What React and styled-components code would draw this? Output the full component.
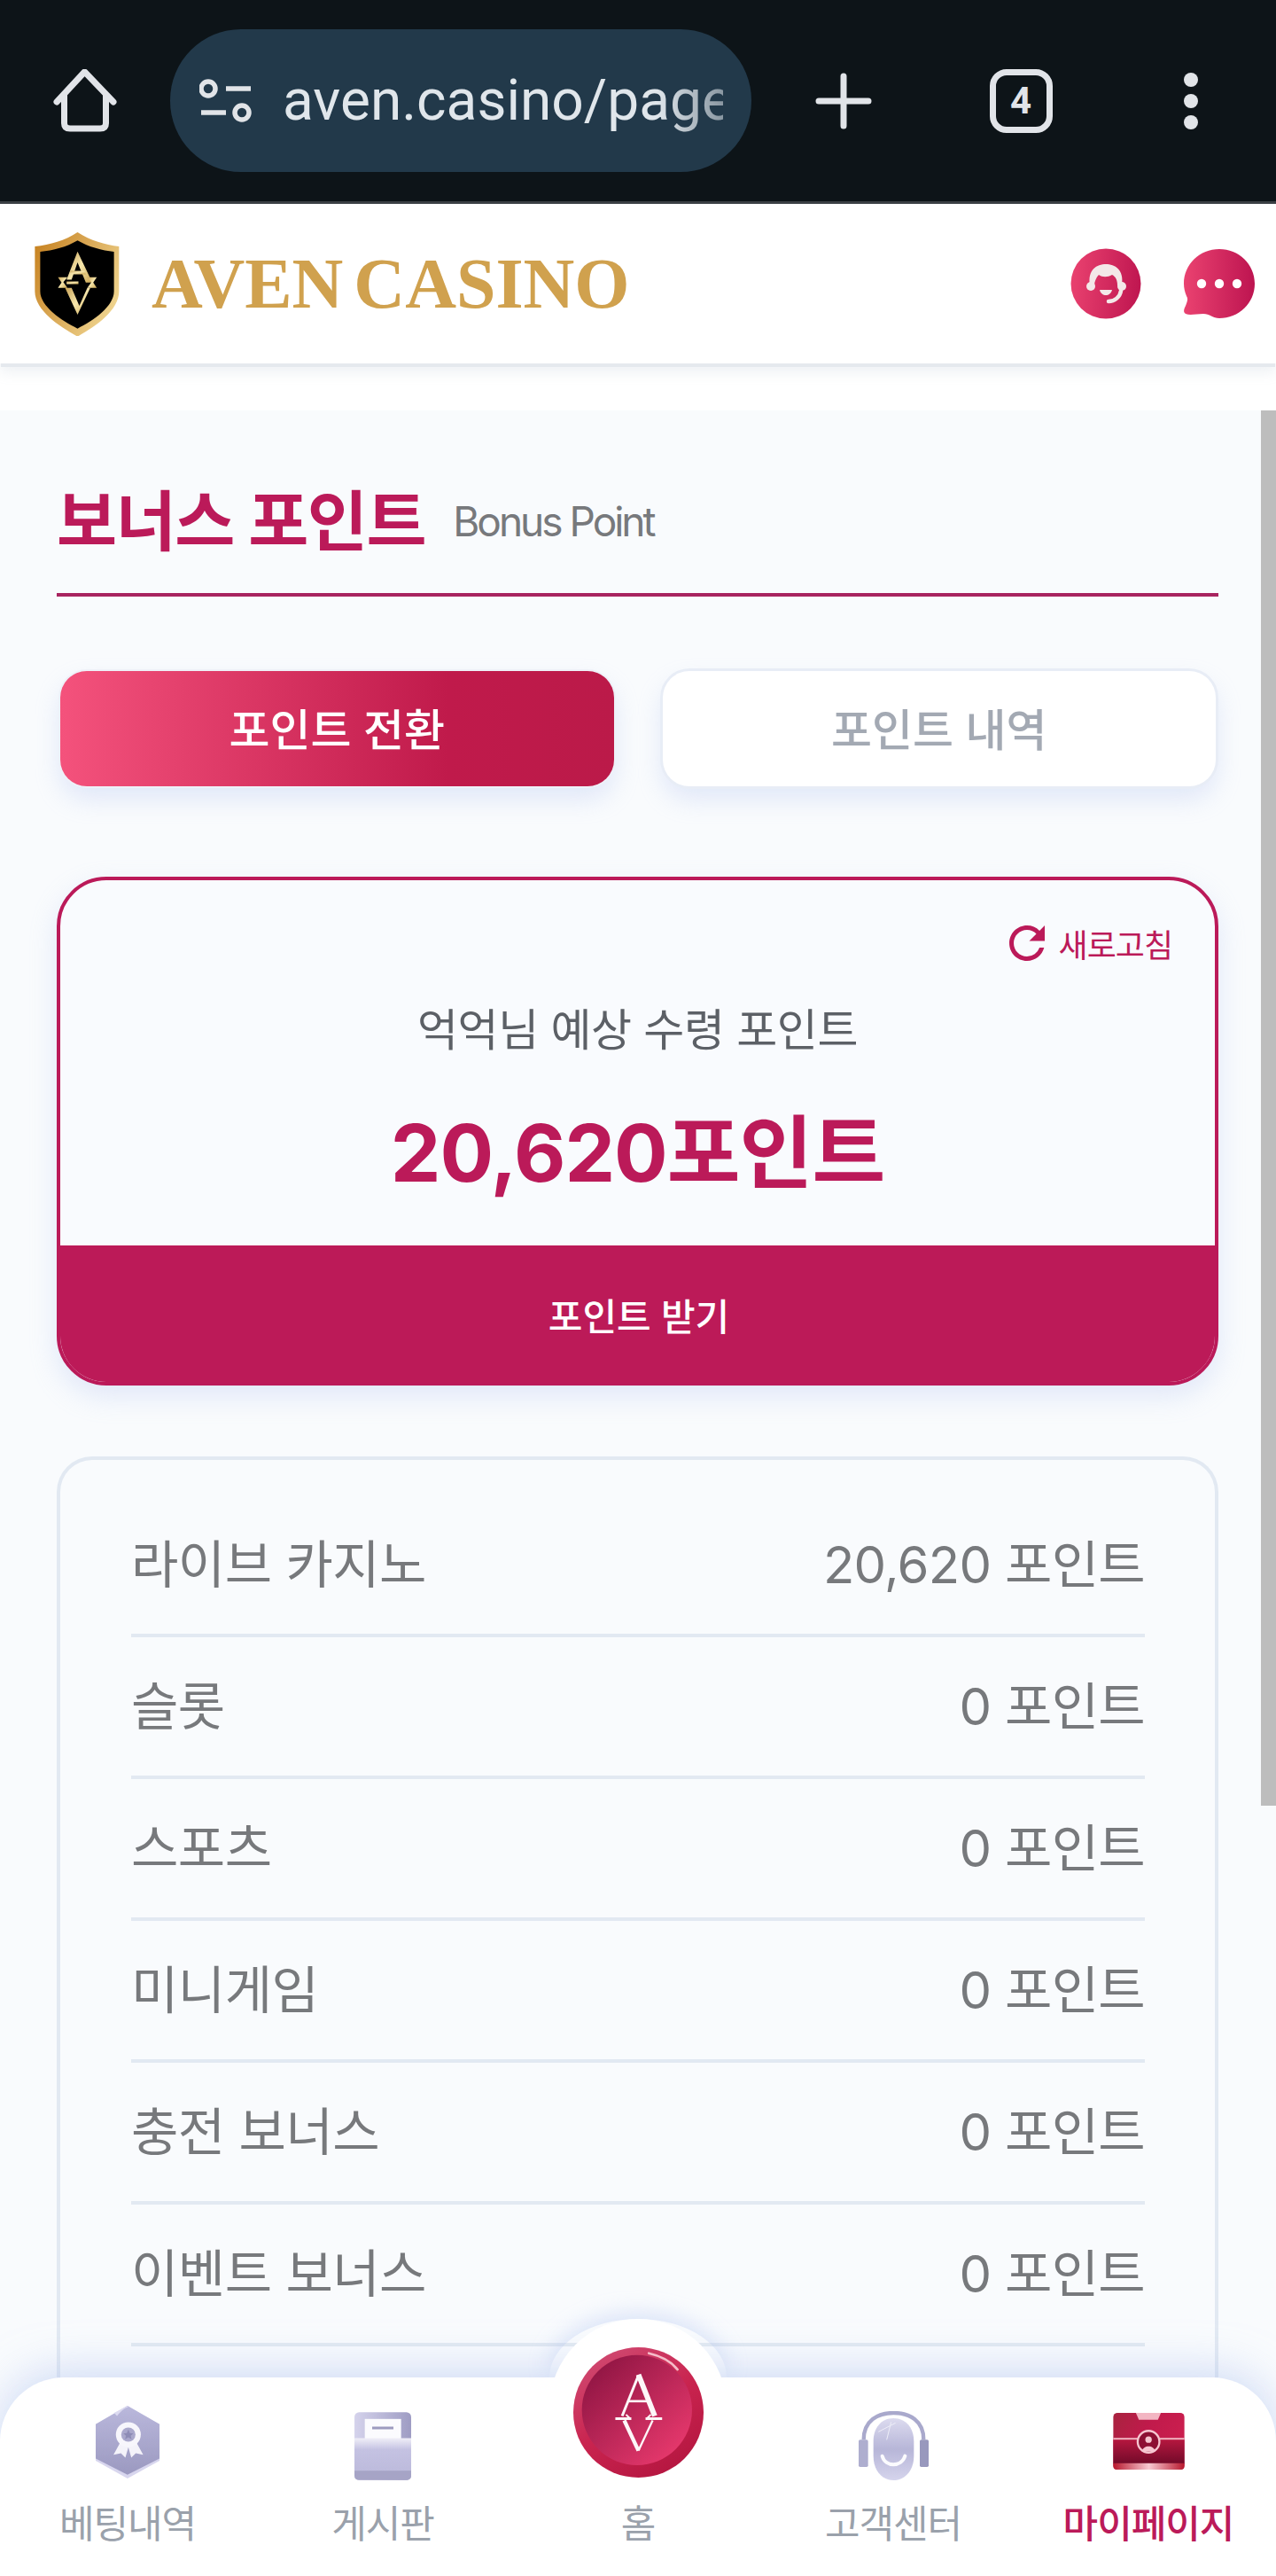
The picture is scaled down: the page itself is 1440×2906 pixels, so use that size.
import React from "react";
import styled, { createGlobalStyle } from "styled-components";
import { MdRefresh } from "react-icons/md";

const GlobalStyle = createGlobalStyle`
  html, body { margin: 0; padding: 0; background: #fff; }
  * { box-sizing: border-box; }
  body { font-family: Inter, "Noto Sans CJK KR", sans-serif; }
`;

const Page = styled.div`
  position: relative;
  height: 100vh;
  overflow: hidden;
  display: flex;
  flex-direction: column;
  background: #fff;
`;

/* browser chrome */
const BrowserBar = styled.div`
  flex: none;
  height: 230px;
  background: #0d1418;
  border-bottom: 3px solid #3a3f44;
  display: flex;
  align-items: center;
`;
const ChromeCell = styled.div`
  flex: none;
  width: ${(p) => p.$w}px;
  display: flex;
  align-items: center;
  justify-content: center;
`;
const UrlPill = styled.div`
  flex: none;
  width: 656px;
  height: 161px;
  border-radius: 80px;
  background: #22394a;
  display: flex;
  align-items: center;
  padding: 0 32px 0 33px;
`;
const UrlText = styled.div`
  margin-left: 34px;
  flex: 1;
  overflow: hidden;
  white-space: nowrap;
  font-family: Roboto, sans-serif;
  font-size: 64px;
  line-height: 90px;
  color: #e0e6eb;
  -webkit-mask-image: linear-gradient(90deg, #000 85%, rgba(0, 0, 0, 0.55) 100%);
  mask-image: linear-gradient(90deg, #000 85%, rgba(0, 0, 0, 0.55) 100%);
`;
const TabCount = styled.div`
  width: 71px;
  height: 72px;
  border: 7px solid #e1e4e8;
  border-radius: 19px;
  display: flex;
  align-items: center;
  justify-content: center;
  font-family: Roboto, sans-serif;
  font-weight: 700;
  font-size: 42px;
  color: #e1e4e8;
`;
const MenuDots = styled.div`
  display: flex;
  flex-direction: column;
  gap: 8px;
`;
const MenuDot = styled.span`
  display: block;
  width: 16px;
  height: 16px;
  border-radius: 50%;
  background: #e1e4e8;
`;

/* site header */
const SiteHeader = styled.header`
  flex: none;
  height: 180px;
  background: #fff;
  display: flex;
  align-items: center;
  padding: 0 24px 0 39px;
  box-shadow: 0 5px 0 -1px #e5e9ee, 0 10px 14px rgba(150, 165, 185, 0.16);
  position: relative;
`;
const Brand = styled.div`
  display: flex;
  align-items: center;
  gap: 36px;
  flex: 1;
`;
const BrandName = styled.div`
  font-family: "Liberation Serif", serif;
  font-weight: 700;
  font-size: 80px;
  line-height: 1;
  color: #d0a14e;
  letter-spacing: 0;
  word-spacing: -8px;
  white-space: nowrap;
`;
const HeaderActions = styled.div`
  display: flex;
  align-items: center;
  gap: 48px;
`;

/* main */
const Main = styled.main`
  flex: 1;
  min-height: 0;
  margin-top: 53px;
  background: #f9fbfd;
  padding: 0 65px 0 64px;
  display: flex;
  flex-direction: column;
`;
const TitleRow = styled.div`
  flex: none;
  display: flex;
  align-items: center;
  gap: 31px;
  padding: 80px 0 36px;
  border-bottom: 4px solid #a8245f;
`;
const Title = styled.h1`
  margin: 0;
  font-size: 74px;
  line-height: 90px;
  font-weight: 700;
  letter-spacing: -1.4px;
  color: #bb1a59;
`;
const SubTitle = styled.span`
  font-size: 46px;
  line-height: 60px;
  font-weight: 400;
  letter-spacing: -3px;
  color: #77797c;
`;
const TabRow = styled.div`
  flex: none;
  margin-top: 84px;
  padding: 0 3px 0 4px;
  display: grid;
  grid-template-columns: 1fr 1fr;
  gap: 55px;
`;
const TabButton = styled.button`
  height: 130px;
  border: 0;
  border-radius: 30px;
  padding: 0 0 5px;
  font-family: inherit;
  font-size: 50px;
  font-weight: 500;
  color: ${(p) => (p.$active ? "#fff" : "#a3a9b3")};
  background: ${(p) =>
    p.$active ? "linear-gradient(90deg, #f4527c 0%, #c01a4b 70%, #bb1a49 100%)" : "#fff"};
  box-shadow: ${(p) => (p.$active ? "0 0 0 2px #eef1f8," : "0 0 0 3px #e8edf6,")}
    0 14px 28px rgba(170, 190, 240, 0.32);
`;
const PointCard = styled.section`
  flex: none;
  margin-top: 102px;
  height: 574px;
  border: 4px solid #bb1a59;
  border-radius: 56px;
  overflow: hidden;
  display: flex;
  flex-direction: column;
  box-shadow: 0 12px 30px rgba(170, 190, 240, 0.3);
  background: #f9fbfe;
`;
const PointBody = styled.div`
  flex: 1;
  padding: 51px 48px 0;
  display: flex;
  flex-direction: column;
  align-items: center;
`;
const RefreshLink = styled.div`
  align-self: flex-end;
  height: 40px;
  display: flex;
  align-items: center;
  gap: 11px;
  font-size: 36px;
  letter-spacing: -1px;
  color: #bb1a59;
  svg { flex: none; margin: 0 -5px 0 -10px; }
`;
const PointLabel = styled.div`
  margin-top: 48px;
  font-size: 50px;
  letter-spacing: -0.4px;
  line-height: 60px;
  color: #5c6066;
`;
const PointValue = styled.div`
  margin-top: 54px;
  font-size: 90px;
  line-height: 110px;
  font-weight: 700;
  letter-spacing: -1px;
  color: #bb1a59;
`;
const ClaimBand = styled.div`
  flex: none;
  height: 154px;
  background: #bc1a58;
  color: #fff;
  font-size: 42px;
  font-weight: 500;
  display: flex;
  align-items: center;
  justify-content: center;
  padding-left: 3px;
`;
const BreakdownCard = styled.section`
  flex: 1;
  min-height: 0;
  margin-top: 80px;
  border: 4px solid #e2e9f2;
  border-bottom: 0;
  border-radius: 40px 40px 0 0;
  padding: 40px 79px 0 80px;
`;
const Row = styled.div`
  height: 160px;
  padding-bottom: 8px;
  border-bottom: 4px solid #e2e9f2;
  display: flex;
  align-items: center;
  justify-content: space-between;
  font-size: 58px;
  color: #77797c;
  letter-spacing: -0.5px;
`;
const RowValue = styled.span`
  letter-spacing: -0.7px;
`;

/* scrollbar */
const ScrollThumb = styled.div`
  position: absolute;
  top: 463px;
  right: 0;
  width: 17px;
  height: 1574px;
  background: #bdbdbd;
`;

/* bottom nav */
const BottomNav = styled.nav`
  position: absolute;
  left: 0;
  right: 0;
  bottom: 0;
  height: 224px;
  background: #fff;
  border-radius: 72px 72px 0 0;
  box-shadow: 0 -6px 50px rgba(170, 190, 240, 0.55);
  display: grid;
  grid-template-columns: repeat(5, 1fr);
`;
const NavItem = styled.div`
  position: relative;
  display: flex;
  flex-direction: column;
  align-items: center;
  padding-top: 30px;
`;
const NavIconBox = styled.div`
  height: 86px;
  display: flex;
  align-items: flex-end;
  justify-content: center;
  svg { margin-bottom: ${(p) => p.$lift || 0}px; }
`;
const NavLabel = styled.div`
  margin-top: 24px;
  font-size: 43px;
  line-height: 50px;
  letter-spacing: -1px;
  white-space: nowrap;
  font-weight: ${(p) => (p.$active ? 500 : 400)};
  color: ${(p) => (p.$active ? "#bb1a59" : "#9aa1ab")};
`;
const HomeGlow = styled.div`
  position: absolute;
  top: -66px;
  left: 50%;
  margin-left: -100px;
  width: 200px;
  height: 66px;
  border-radius: 100px 100px 0 0 / 66px 66px 0 0;
  box-shadow: 0 -6px 24px rgba(170, 190, 240, 0.4);
  clip-path: inset(-40px -40px 0 -40px);
`;
const HomeDisc = styled.div`
  position: absolute;
  top: -66px;
  left: 50%;
  margin-left: -100px;
  width: 200px;
  height: 200px;
  border-radius: 50%;
  background: #fff;
  display: flex;
  justify-content: center;
  padding-top: 32px;
`;

const HomeGlyph = () => (
  <svg width="72" height="72" viewBox="60 78 72 72" fill="none" stroke="#e1e4e8" strokeWidth="7" strokeLinecap="round" strokeLinejoin="round">
    <path d="M64 115 L95.5 81 L128 115" />
    <path d="M72.5 108 V139 Q72.5 145 79 145 H113 Q119.5 145 119.5 139 V108" />
  </svg>
);
const TuneGlyph = () => (
  <svg width="60" height="52" viewBox="226 88 60 52" fill="none" stroke="#e1e4e8" strokeWidth="5.5">
    <circle cx="236" cy="100" r="8" />
    <circle cx="274" cy="127" r="8" />
    <path d="M256 100 H284 M228 127 H256" />
  </svg>
);
const PlusGlyph = () => (
  <svg width="64" height="64" viewBox="0 0 64 64" stroke="#e1e4e8" strokeWidth="7" strokeLinecap="round">
    <path d="M32 4 V60 M4 32 H60" />
  </svg>
);

const ShieldLogo = () => (
  <svg width="96" height="117" viewBox="28 20 285 350">
    <defs>
      <linearGradient id="shieldRim" x1="0" y1="0" x2="1" y2="0.6">
        <stop offset="0" stopColor="#c67f1c" />
        <stop offset="0.5" stopColor="#d9a754" />
        <stop offset="1" stopColor="#eed28c" />
      </linearGradient>
      <linearGradient id="shieldMark" x1="0" y1="0" x2="1" y2="1">
        <stop offset="0" stopColor="#c9a256" />
        <stop offset="0.5" stopColor="#f6e6ac" />
        <stop offset="1" stopColor="#cba652" />
      </linearGradient>
    </defs>
    <path d="M172 20 C215 48 265 62 312 68 V220 C312 285 230 340 172 372 C114 340 28 285 28 220 V68 C80 62 130 48 172 20 Z" fill="url(#shieldRim)" />
    <path d="M172 48 C210 70 255 82 295 86 V220 C295 270 225 320 172 345 C119 320 46 270 46 220 V86 C90 82 135 70 172 48 Z" fill="#000" />
    <g fill="url(#shieldMark)">
      <path d="M172 85 L222 190 H200 L172 122 L152 180 H135 Z" />
      <path d="M148 150 H196 L200 162 H144 Z" />
      <path d="M106 172 H138 L124 188 L138 208 H106 L118 190 Z" />
      <path d="M205 172 H237 L225 190 L237 208 H205 L219 188 Z" />
      <path d="M130 208 H152 L178 268 L205 208 H215 L172 298 Z" />
      <rect x="135" y="186" width="40" height="9" />
    </g>
  </svg>
);

const SupportBadge = () => (
  <svg width="80" height="80" viewBox="0 0 80 80">
    <defs>
      <linearGradient id="badgeA" x1="0" y1="0.4" x2="1" y2="0.5">
        <stop offset="0" stopColor="#e9416f" />
        <stop offset="1" stopColor="#bf1650" />
      </linearGradient>
    </defs>
    <circle cx="40" cy="40" r="39.5" fill="url(#badgeA)" />
    <path d="M22 42 C19 24 30 18 40 18 C50 18 61 24 58 42 L53 42 C53 36 51 32 47 30 C42 33 36 33 32 30 C29 33 27 38 27 42 Z" fill="#f3e8e8" />
    <circle cx="23" cy="43" r="5" fill="#f3e8e8" />
    <circle cx="58" cy="43" r="5" fill="#f3e8e8" />
    <path d="M33 47 H47 C46 51 43 53 40 53 C37 53 34 51 33 47 Z" fill="#f3e8e8" />
    <path d="M57 48 C56 55 50 60 43 60" fill="none" stroke="#f3e8e8" strokeWidth="4.5" strokeLinecap="round" />
  </svg>
);
const ChatBadge = () => (
  <svg width="80" height="80" viewBox="0 0 80 80">
    <defs>
      <linearGradient id="badgeB" x1="0" y1="0.5" x2="1" y2="0.5">
        <stop offset="0" stopColor="#ea4270" />
        <stop offset="1" stopColor="#bd1450" />
      </linearGradient>
    </defs>
    <path d="M40 1 C62 1 80 18 80 40 C80 62 62 79 40 79 C33 79 29 74 22 74 C14 74 7 76 2 74 C-1 72 0 69 2 65 C4 60 5 57 3 54 C1 49 0 45 0 40 C0 18 18 1 40 1 Z" fill="url(#badgeB)" />
    <circle cx="20" cy="40" r="5.2" fill="#fff" />
    <circle cx="40" cy="40" r="5.2" fill="#fff" />
    <circle cx="60" cy="40" r="5.2" fill="#fff" />
  </svg>
);

const BadgeIcon = () => (
  <svg width="72" height="82" viewBox="40 40 215 245">
    <defs>
      <linearGradient id="hexA" x1="0" y1="0" x2="0" y2="1">
        <stop offset="0" stopColor="#bab8dc" />
        <stop offset="1" stopColor="#9b99c0" />
      </linearGradient>
    </defs>
    <path d="M147 40 L255 102 V225 L147 285 L40 225 V102 Z" fill="#d8d6ee" />
    <path d="M147 40 L255 102 V218 L147 272 L40 218 V102 Z" fill="url(#hexA)" />
    <path d="M147 40 L150 44 C135 48 122 62 112 74 L102 64 Z" fill="#dcdaf0" />
    <path d="M122 165 L100 205 L125 200 L140 215 L150 180 L160 215 L175 200 L200 205 L178 165 Z" fill="#f4f3fa" />
    <circle cx="150" cy="137" r="42" fill="#f7f6fc" />
    <circle cx="150" cy="137" r="24" fill="#aaa8cc" />
    <path d="M150 120 L155 132 L167 133 L158 141 L161 153 L150 146 L139 153 L142 141 L133 133 L145 132 Z" fill="#8e8cb6" />
  </svg>
);
const BoardIcon = () => (
  <svg width="64" height="77" viewBox="915 62 192 230">
    <defs>
      <linearGradient id="boardTop" x1="0" y1="0" x2="1" y2="0">
        <stop offset="0" stopColor="#d5d3ec" />
        <stop offset="1" stopColor="#9e9cc3" />
      </linearGradient>
      <linearGradient id="boardLow" x1="0" y1="0" x2="0" y2="1">
        <stop offset="0" stopColor="#f0eff8" />
        <stop offset="0.35" stopColor="#c4c2e2" />
        <stop offset="1" stopColor="#bdbbdc" />
      </linearGradient>
    </defs>
    <rect x="915" y="62" width="192" height="230" rx="16" fill="url(#boardTop)" />
    <rect x="950" y="85" width="123" height="70" fill="#fbfbfe" />
    <rect x="975" y="111" width="72" height="9" fill="#9d9bbf" />
    <rect x="915" y="150" width="192" height="112" fill="url(#boardLow)" />
    <path d="M915 260 H1107 V276 Q1107 292 1091 292 H931 Q915 292 915 276 Z" fill="#a6a4c6" />
  </svg>
);
const HeadsetIcon = () => (
  <svg width="79" height="78" viewBox="25 38 237 234">
    <defs>
      <linearGradient id="headA" x1="0" y1="0" x2="0" y2="1">
        <stop offset="0" stopColor="#dcdbef" />
        <stop offset="0.5" stopColor="#b7b6d8" />
        <stop offset="1" stopColor="#d5d4ec" />
      </linearGradient>
    </defs>
    <path d="M42 135 C42 70 90 44 143 44 C197 44 245 70 245 135" fill="none" stroke="#a9a9cc" strokeWidth="13" />
    <path d="M143 62 C185 62 212 95 212 140 V190 C212 240 180 272 143 272 C106 272 75 240 75 190 V140 C75 95 101 62 143 62 Z" fill="url(#headA)" />
    <rect x="25" y="135" width="32" height="92" rx="5" fill="#aeaecf" />
    <rect x="232" y="135" width="30" height="92" rx="5" fill="#9898bd" />
    <path d="M92 108 L150 78 M135 75 L120 135" stroke="#eeeef8" strokeWidth="3" fill="none" />
    <path d="M105 190 C115 228 170 228 182 190" fill="none" stroke="#fbfbfe" strokeWidth="12" strokeLinecap="round" />
  </svg>
);
const WalletIcon = () => (
  <svg width="81" height="64" viewBox="888 47 242 193">
    <defs>
      <linearGradient id="walTop" x1="0" y1="0" x2="1" y2="0.4">
        <stop offset="0" stopColor="#a8233f" />
        <stop offset="0.5" stopColor="#c01a4b" />
        <stop offset="1" stopColor="#cb1f4f" />
      </linearGradient>
      <linearGradient id="walLow" x1="0" y1="0" x2="0" y2="1">
        <stop offset="0" stopColor="#b5173f" />
        <stop offset="1" stopColor="#720a29" />
      </linearGradient>
      <linearGradient id="walLip" x1="0" y1="0" x2="1" y2="0">
        <stop offset="0" stopColor="#b8182e" />
        <stop offset="0.5" stopColor="#f7c9d2" />
        <stop offset="1" stopColor="#b8182e" />
      </linearGradient>
    </defs>
    <rect x="888" y="47" width="242" height="193" rx="14" fill="url(#walTop)" />
    <rect x="888" y="138" width="242" height="82" fill="url(#walLow)" />
    <path d="M888 218 H1130 V228 Q1130 240 1118 240 H900 Q888 240 888 228 Z" fill="url(#walLip)" />
    <path d="M965 47 H1050 L1040 70 H975 Z" fill="#f3b6c3" />
    <rect x="888" y="132" width="242" height="6" fill="#f0b3c0" />
    <circle cx="1008" cy="145" r="37" fill="#8d1033" stroke="#f6c6d0" strokeWidth="7" />
    <circle cx="1008" cy="138" r="11" fill="#f6c6d0" />
    <path d="M985 178 C990 155 1026 155 1031 178 Z" fill="#f6c6d0" />
  </svg>
);
const HomeMark = () => (
  <svg width="147" height="147" viewBox="80 113 440 440">
    <defs>
      <linearGradient id="homeRing" x1="0.2" y1="0" x2="0.8" y2="1">
        <stop offset="0" stopColor="#d04a72" />
        <stop offset="0.5" stopColor="#c9244f" />
        <stop offset="1" stopColor="#b3153f" />
      </linearGradient>
      <linearGradient id="homeFace" x1="0.1" y1="0.1" x2="0.85" y2="0.9">
        <stop offset="0" stopColor="#8f1543" />
        <stop offset="1" stopColor="#e6386c" />
      </linearGradient>
    </defs>
    <circle cx="300" cy="333" r="220" fill="url(#homeRing)" />
    <circle cx="295" cy="325" r="186" fill="url(#homeFace)" />
    <path d="M335 133 C375 142 410 160 432 188" fill="none" stroke="#f5bcc9" strokeWidth="8" strokeLinecap="round" />
    <g fill="none" stroke="#fdf6f8" strokeLinejoin="round">
      <path d="M300 208 L245 345" strokeWidth="9" />
      <path d="M300 205 L355 345" strokeWidth="18" />
      <path d="M266 295 H334" strokeWidth="8" />
      <path d="M222 354 H276 M324 354 H380" strokeWidth="9" />
      <path d="M252 360 L300 462" strokeWidth="13" />
      <path d="M300 462 L348 360" strokeWidth="7" />
      <path d="M272 354 L258 340 M328 354 L342 340" strokeWidth="6" />
    </g>
  </svg>
);

const rows = [
  ["라이브 카지노", "20,620 포인트"],
  ["슬롯", "0 포인트"],
  ["스포츠", "0 포인트"],
  ["미니게임", "0 포인트"],
  ["충전 보너스", "0 포인트"],
  ["이벤트 보너스", "0 포인트"],
];

export default function App() {
  return (
    <Page>
      <GlobalStyle />
      <BrowserBar>
        <ChromeCell $w={192}><HomeGlyph /></ChromeCell>
        <UrlPill>
          <TuneGlyph />
          <UrlText>aven.casino/page</UrlText>
        </UrlPill>
        <ChromeCell $w={208}><PlusGlyph /></ChromeCell>
        <ChromeCell $w={192}><TabCount>4</TabCount></ChromeCell>
        <ChromeCell $w={192}>
          <MenuDots><MenuDot /><MenuDot /><MenuDot /></MenuDots>
        </ChromeCell>
      </BrowserBar>

      <SiteHeader>
        <Brand>
          <ShieldLogo />
          <BrandName>AVEN CASINO</BrandName>
        </Brand>
        <HeaderActions>
          <SupportBadge />
          <ChatBadge />
        </HeaderActions>
      </SiteHeader>

      <Main>
        <TitleRow>
          <Title>보너스 포인트</Title>
          <SubTitle>Bonus Point</SubTitle>
        </TitleRow>
        <TabRow>
          <TabButton $active>포인트 전환</TabButton>
          <TabButton>포인트 내역</TabButton>
        </TabRow>
        <PointCard>
          <PointBody>
            <RefreshLink>
              <MdRefresh size={60} />
              새로고침
            </RefreshLink>
            <PointLabel>억억님 예상 수령 포인트</PointLabel>
            <PointValue>20,620포인트</PointValue>
          </PointBody>
          <ClaimBand>포인트 받기</ClaimBand>
        </PointCard>
        <BreakdownCard>
          {rows.map(([label, value]) => (
            <Row key={label}>
              <span>{label}</span>
              <RowValue>{value}</RowValue>
            </Row>
          ))}
        </BreakdownCard>
      </Main>

      <ScrollThumb />

      <BottomNav>
        <NavItem>
          <NavIconBox $lift={2}><BadgeIcon /></NavIconBox>
          <NavLabel>베팅내역</NavLabel>
        </NavItem>
        <NavItem>
          <NavIconBox><BoardIcon /></NavIconBox>
          <NavLabel>게시판</NavLabel>
        </NavItem>
        <NavItem>
          <HomeGlow />
          <HomeDisc><HomeMark /></HomeDisc>
          <NavIconBox />
          <NavLabel>홈</NavLabel>
        </NavItem>
        <NavItem>
          <NavIconBox><HeadsetIcon /></NavIconBox>
          <NavLabel>고객센터</NavLabel>
        </NavItem>
        <NavItem>
          <NavIconBox $lift={12}><WalletIcon /></NavIconBox>
          <NavLabel $active>마이페이지</NavLabel>
        </NavItem>
      </BottomNav>
    </Page>
  );
}
